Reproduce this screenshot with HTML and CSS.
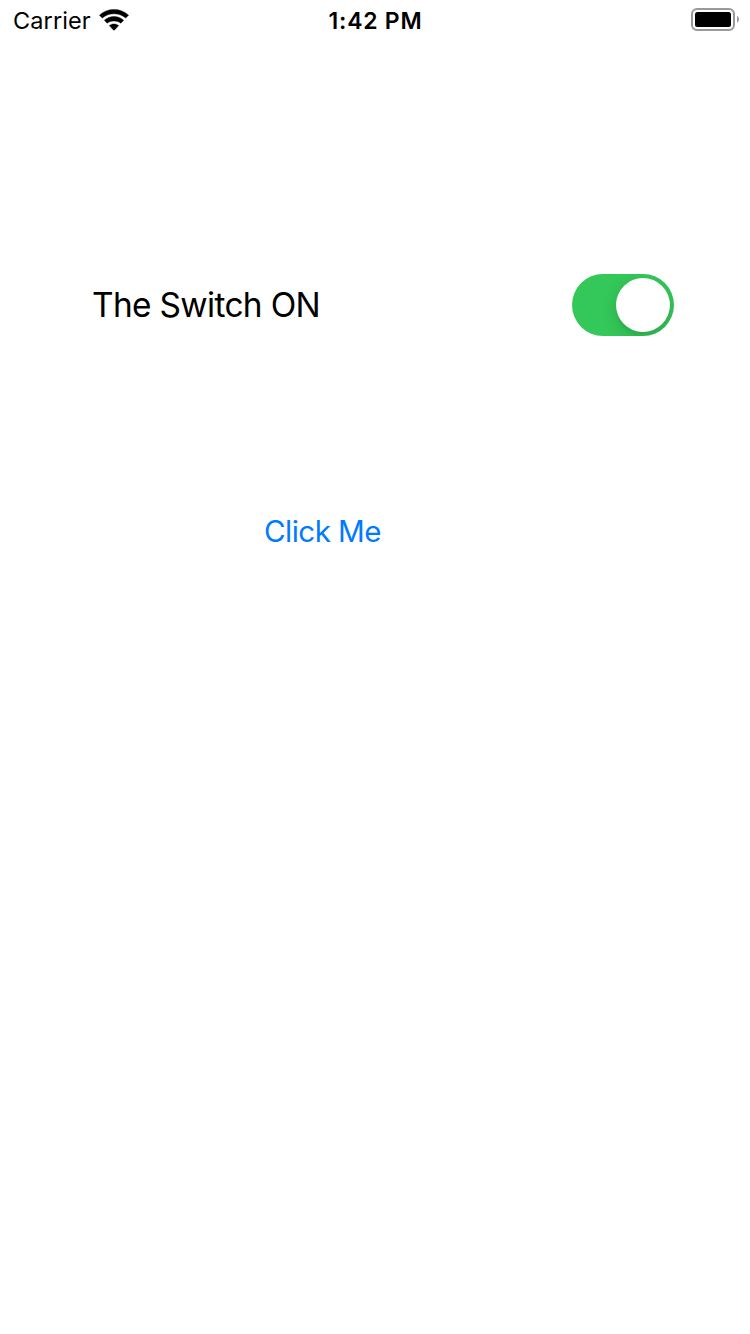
FILE: index.html
```html
<!DOCTYPE html>
<html lang="en">
<head>
<meta charset="utf-8">
<title>Switch</title>
<link rel="stylesheet" href="styles.css">
</head>
<body>
<header class="status-bar">
  <div class="network">
    <span class="carrier">Carrier</span>
    <svg class="wifi" width="30" height="22" viewBox="0 0 30 22" aria-hidden="true">
      <path d="M0.4 6.2C8.4-1.5 21.6-1.5 29.6 6.2L26.7 9.1C20.3 3.4 9.7 3.4 3.3 9.1Z"/>
      <path d="M5.3 11.3C10.6 6.2 19.4 6.2 24.7 11.3L21.8 14.2C18.1 11.1 11.9 11.1 8.2 14.2Z"/>
      <path d="M10.3 16.6C12.8 14.4 17.2 14.4 19.7 16.6L15.6 20.9Q15 21.5 14.4 20.9Z"/>
    </svg>
  </div>
  <time class="clock">1:42 PM</time>
  <div class="power">
    <svg class="battery" width="50" height="24" viewBox="0 0 50 24" aria-hidden="true">
      <rect class="battery-case" x="2" y="2" width="42" height="21" rx="5"/>
      <rect x="5" y="5" width="36" height="15" rx="2.5"/>
      <path class="battery-tip" d="M47 8.7Q49 9.7 49 12.3T47 16Z"/>
    </svg>
  </div>
</header>
<main class="content">
  <div class="switch-row">
    <span class="switch-label">The Switch ON</span>
    <div class="switch" role="switch" aria-checked="true" aria-label="The Switch"><div class="knob"></div></div>
  </div>
  <button class="action" type="button">Click Me</button>
</main>
</body>
</html>
```
FILE: styles.css
```css
* { box-sizing: border-box; }

body {
  margin: 0;
  min-height: 1334px;
  background: #fff;
  color: #000;
  font-family: Inter, "Liberation Sans", sans-serif;
}

svg { display: block; }

.status-bar {
  display: grid;
  grid-template-columns: 1fr auto 1fr;
  height: 40px;
  padding: 0 10px 0 13px;
  font-size: 23.5px;
  line-height: 41px;
}

.network { display: flex; }
.carrier { width: 86px; letter-spacing: 0.1px; white-space: nowrap; }
.wifi { margin-top: 9px; stroke: #000; stroke-width: 0.4; stroke-linejoin: round; }
.clock { padding-top: 1px; margin-left: -2px; font-weight: 600; font-size: 23px; letter-spacing: 0.75px; white-space: nowrap; }
.power { display: flex; justify-content: flex-end; padding-top: 7px; }
.battery-case { fill: none; stroke: #999; stroke-width: 2; }
.battery-tip { fill: #999; }

.content { padding: 234px 76px 0 92px; }

.switch-row {
  display: flex;
  justify-content: space-between;
  height: 62px;
}

.switch-label {
  font-size: 33.4px;
  line-height: 62px;
  letter-spacing: -0.65px;
}

.switch {
  display: flex;
  justify-content: flex-end;
  width: 102px;
  height: 62px;
  padding: 4px;
  border-radius: 31px;
  background: #34c759;
  overflow: hidden;
}

.knob {
  width: 54px;
  height: 54px;
  border-radius: 50%;
  background: #fff;
  box-shadow: 0 5px 16px rgba(0, 0, 0, 0.14), 0 5px 2px rgba(0, 0, 0, 0.03);
}

.action {
  display: block;
  margin: 164px 0 0 172px;
  padding: 0;
  border: 0;
  background: none;
  color: #007aff;
  font: 29.6px/62px Inter, "Liberation Sans", sans-serif;
  letter-spacing: -0.55px;
  white-space: nowrap;
}
```
